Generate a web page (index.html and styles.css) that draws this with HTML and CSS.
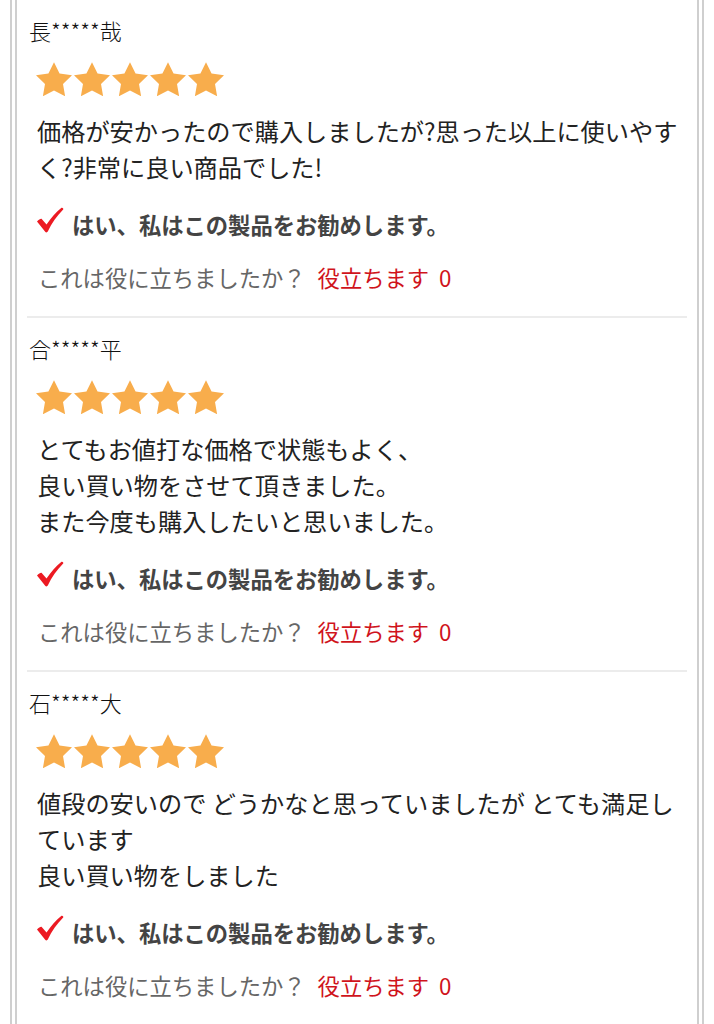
FILE: index.html
```html
<!DOCTYPE html>
<html lang="ja">
<head>
    <meta charset="UTF-8">
    <meta name="viewport" content="width=device-width, initial-scale=1.0">
    <title>レビュー</title>

    <link rel="stylesheet" href="styles.css">

</head>
<body>
    <div class="frame">
        <div class="reviews">

            <div class="review">
                <div class="reviewer">長*****哉</div>
                <div class="stars">
                    <svg viewBox="2 2 20 19.3"><polygon points="12,2 15.09,8.26 22,9.27 17,14.14 18.18,21.02 12,17.77 5.82,21.02 7,14.14 2,9.27 8.91,8.26"/></svg>
                    <svg viewBox="2 2 20 19.3"><polygon points="12,2 15.09,8.26 22,9.27 17,14.14 18.18,21.02 12,17.77 5.82,21.02 7,14.14 2,9.27 8.91,8.26"/></svg>
                    <svg viewBox="2 2 20 19.3"><polygon points="12,2 15.09,8.26 22,9.27 17,14.14 18.18,21.02 12,17.77 5.82,21.02 7,14.14 2,9.27 8.91,8.26"/></svg>
                    <svg viewBox="2 2 20 19.3"><polygon points="12,2 15.09,8.26 22,9.27 17,14.14 18.18,21.02 12,17.77 5.82,21.02 7,14.14 2,9.27 8.91,8.26"/></svg>
                    <svg viewBox="2 2 20 19.3"><polygon points="12,2 15.09,8.26 22,9.27 17,14.14 18.18,21.02 12,17.77 5.82,21.02 7,14.14 2,9.27 8.91,8.26"/></svg>
                </div>
                <p class="comment">価格が安かったので購入しましたが?思った以上に使いやすく?非常に良い商品でした!</p>
                <div class="recommend">
                    <svg class="check" viewBox="0 0 28 26"><path d="M1 14.5 C3 12.5 4.5 11.5 5.5 11.8 L10.5 17.5 C15 11 20 5 25.5 0.8 C26.6 0.3 27.8 1.6 27.2 2.6 C21 9 15.5 16.5 11.8 24.6 C11.2 25.6 9.8 25.6 9.2 24.8 Z"/></svg>
                    <span>はい、私はこの製品をお勧めします。</span>
                </div>
                <div class="helpful">
                    <span class="question">これは役に立ちましたか？</span>
                    <span class="useful">役立ちます <span class="count">0</span></span>
                </div>
            </div>

            <div class="review">
                <div class="reviewer">合*****平</div>
                <div class="stars">
                    <svg viewBox="2 2 20 19.3"><polygon points="12,2 15.09,8.26 22,9.27 17,14.14 18.18,21.02 12,17.77 5.82,21.02 7,14.14 2,9.27 8.91,8.26"/></svg>
                    <svg viewBox="2 2 20 19.3"><polygon points="12,2 15.09,8.26 22,9.27 17,14.14 18.18,21.02 12,17.77 5.82,21.02 7,14.14 2,9.27 8.91,8.26"/></svg>
                    <svg viewBox="2 2 20 19.3"><polygon points="12,2 15.09,8.26 22,9.27 17,14.14 18.18,21.02 12,17.77 5.82,21.02 7,14.14 2,9.27 8.91,8.26"/></svg>
                    <svg viewBox="2 2 20 19.3"><polygon points="12,2 15.09,8.26 22,9.27 17,14.14 18.18,21.02 12,17.77 5.82,21.02 7,14.14 2,9.27 8.91,8.26"/></svg>
                    <svg viewBox="2 2 20 19.3"><polygon points="12,2 15.09,8.26 22,9.27 17,14.14 18.18,21.02 12,17.77 5.82,21.02 7,14.14 2,9.27 8.91,8.26"/></svg>
                </div>
                <p class="comment">とてもお値打な価格で状態もよく、<br>良い買い物をさせて頂きました。<br>また今度も購入したいと思いました。</p>
                <div class="recommend">
                    <svg class="check" viewBox="0 0 28 26"><path d="M1 14.5 C3 12.5 4.5 11.5 5.5 11.8 L10.5 17.5 C15 11 20 5 25.5 0.8 C26.6 0.3 27.8 1.6 27.2 2.6 C21 9 15.5 16.5 11.8 24.6 C11.2 25.6 9.8 25.6 9.2 24.8 Z"/></svg>
                    <span>はい、私はこの製品をお勧めします。</span>
                </div>
                <div class="helpful">
                    <span class="question">これは役に立ちましたか？</span>
                    <span class="useful">役立ちます <span class="count">0</span></span>
                </div>
            </div>

            <div class="review">
                <div class="reviewer">石*****大</div>
                <div class="stars">
                    <svg viewBox="2 2 20 19.3"><polygon points="12,2 15.09,8.26 22,9.27 17,14.14 18.18,21.02 12,17.77 5.82,21.02 7,14.14 2,9.27 8.91,8.26"/></svg>
                    <svg viewBox="2 2 20 19.3"><polygon points="12,2 15.09,8.26 22,9.27 17,14.14 18.18,21.02 12,17.77 5.82,21.02 7,14.14 2,9.27 8.91,8.26"/></svg>
                    <svg viewBox="2 2 20 19.3"><polygon points="12,2 15.09,8.26 22,9.27 17,14.14 18.18,21.02 12,17.77 5.82,21.02 7,14.14 2,9.27 8.91,8.26"/></svg>
                    <svg viewBox="2 2 20 19.3"><polygon points="12,2 15.09,8.26 22,9.27 17,14.14 18.18,21.02 12,17.77 5.82,21.02 7,14.14 2,9.27 8.91,8.26"/></svg>
                    <svg viewBox="2 2 20 19.3"><polygon points="12,2 15.09,8.26 22,9.27 17,14.14 18.18,21.02 12,17.77 5.82,21.02 7,14.14 2,9.27 8.91,8.26"/></svg>
                </div>
                <p class="comment">値段の安いので どうかなと思っていましたが とても満足しています<br>良い買い物をしました</p>
                <div class="recommend">
                    <svg class="check" viewBox="0 0 28 26"><path d="M1 14.5 C3 12.5 4.5 11.5 5.5 11.8 L10.5 17.5 C15 11 20 5 25.5 0.8 C26.6 0.3 27.8 1.6 27.2 2.6 C21 9 15.5 16.5 11.8 24.6 C11.2 25.6 9.8 25.6 9.2 24.8 Z"/></svg>
                    <span>はい、私はこの製品をお勧めします。</span>
                </div>
                <div class="helpful">
                    <span class="question">これは役に立ちましたか？</span>
                    <span class="useful">役立ちます <span class="count">0</span></span>
                </div>
            </div>

        </div>
    </div>
</body>
</html>
```

FILE: styles.css
```css
* {
    margin: 0;
    padding: 0;
    box-sizing: border-box;
}

body {
    background-color: #fff;
    font-family: "Noto Sans CJK JP", "Noto Sans", sans-serif;
    color: #222;
}

.frame {
    margin: 0 10px;
    padding: 0 3px;
    min-height: 100vh;
    border-left: 2px solid #cfcfcf;
    border-right: 2px solid #cfcfcf;
}

.reviews {
    min-height: 100vh;
    padding: 0 10px;
    border-left: 2px solid #cfcfcf;
    border-right: 2px solid #cfcfcf;
}

.review {
    padding: 15px 0 24px;
    border-bottom: 2px solid #ececec;
}

.reviewer {
    padding-left: 2px;
    font-size: 22px;
    line-height: 30px;
    font-weight: 300;
    color: #111;
}

.stars {
    display: flex;
    gap: 2px;
    margin: 17px 0 0 9px;
    height: 36px;
}

.stars svg {
    width: 36px;
    height: 35px;
    fill: #f8ad4c;
}

.comment {
    margin-top: 15px;
    padding-left: 10px;
    font-size: 24.2px;
    line-height: 36px;
    color: #222;
}

.recommend {
    display: flex;
    align-items: center;
    gap: 8px;
    margin: 24px 0 0 9px;
    line-height: 30px;
    font-size: 22.3px;
    font-weight: 700;
    color: #444;
}

.recommend .check {
    width: 28px;
    height: 26px;
    fill: #ec1a22;
    margin-top: -8px;
}

.helpful {
    display: flex;
    margin: 23px 0 0 11px;
    line-height: 30px;
    font-size: 22.3px;
}

.helpful .question {
    color: #666;
}

.helpful .useful {
    margin-left: 12px;
    color: #d0141c;
}

.helpful .count {
    margin-left: 5px;
}
```
